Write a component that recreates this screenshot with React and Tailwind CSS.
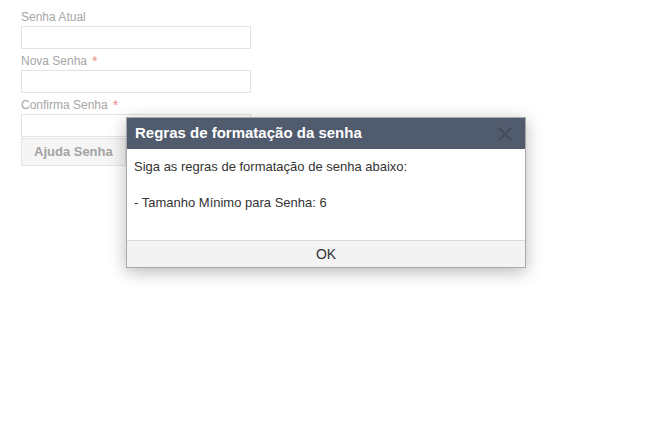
import React from "react";

const Field = ({ label, required }) => (
  <div>
    <div className="mt-1 mb-[1px] h-4 text-xs leading-4 text-[#a6a6a6]">
      {label}
      {required && (
        <span className="ml-[5px] align-top text-[14px] leading-4 text-[#ec8f87]">*</span>
      )}
    </div>
    <input
      type="password"
      className="block w-[230px] h-[23px] border border-[#e2e2e2] bg-white outline-none"
    />
  </div>
);

const App = () => {
  return (
    <div
      className="relative min-h-[427px] w-full bg-white"
      style={{ fontFamily: '"Liberation Sans", Arial, sans-serif' }}
    >
      {/* Form */}
      <div className="pl-[21px] pt-[5px]">
        <Field label="Senha Atual" />
        <Field label="Nova Senha" required />
        <Field label="Confirma Senha" required />
        <button className="mt-[1px] h-[28px] px-3 border border-[#e4e4e4] bg-[#f5f5f5] text-[13px] font-bold text-[#a3a3a3]">
          Ajuda Senha
        </button>
      </div>

      {/* Dialog */}
      <div className="absolute left-[126px] top-[117px] w-[400px] border border-[#a9a9a9] bg-white shadow-[0_4px_16px_rgba(0,0,0,0.28)]">
        <div className="flex h-[31px] items-center justify-between bg-[#505b6d] pl-2 pr-[13px]">
          <span className="text-[15px] font-bold text-white">Regras de formatação da senha</span>
          <svg width="14" height="14" viewBox="0 0 14 14">
            <path d="M1 1L13 13M13 1L1 13" stroke="#434c5d" strokeWidth="2" />
          </svg>
        </div>
        <div className="h-[91px] pl-[7px] pt-[9px] text-[13px] leading-[18px] text-[#333]">
          Siga as regras de formatação de senha abaixo:
          <br />
          <br />- Tamanho Mínimo para Senha: 6
        </div>
        <button className="block h-[27px] w-full border-t border-[#d9d9d9] bg-[#f3f3f3] text-[14px] text-[#333]">
          OK
        </button>
      </div>
    </div>
  );
};

export default App;
